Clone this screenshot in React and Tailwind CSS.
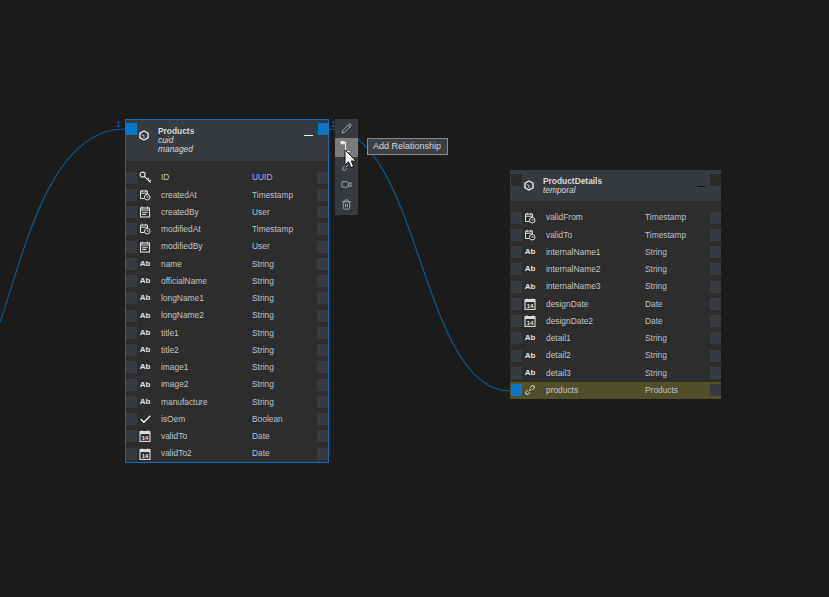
import React from 'react';
import { Pencil, Trash2, Video, Check } from 'lucide-react';

const FONT = { fontFamily: '"Liberation Sans", Arial, sans-serif' };

const NodeIcon = () => (
    <svg width="10" height="11" viewBox="0 0 10 11" fill="none" stroke="#e8e8e8" strokeWidth="1.4">
        <path d="M5 1 9 3.2V7.8L5 10 1 7.8V3.2Z" />
        <path d="M3 4.5 5 5.6V8" strokeWidth="0.8" />
    </svg>
);

const KeyIcon = () => (
    <svg width="13" height="13" viewBox="0 0 13 13" fill="none" stroke="#e4e4e4" strokeWidth="1.2">
        <circle cx="3.6" cy="3.6" r="2.5" />
        <path d="M5.4 5.4 11.6 11.6M8.6 8.6 10 7.2M10.4 10.4 11.9 9" />
    </svg>
);

const ClockCalIcon = () => (
    <svg width="12" height="12" viewBox="0 0 12 12" fill="none" stroke="#dcdcdc" strokeWidth="1">
        <path d="M5 9.5H1.5V2H8.5V5M1.5 4.2H8.5M3.2 .8V2.8M6.8 .8V2.8" />
        <circle cx="8.2" cy="8.2" r="2.8" fill="#2d2d2d" />
        <path d="M8.2 6.8V8.3H9.6" strokeWidth="0.8" />
    </svg>
);

const UserCalIcon = () => (
    <svg width="12" height="12" viewBox="0 0 12 12" fill="none" stroke="#dcdcdc" strokeWidth="1.1">
        <rect x="1.5" y="2" width="9" height="9" />
        <path d="M3.4 .6V2.6M8.6 .6V2.6M1.5 4H10.5M3.2 6.2H8.8M3.2 8.4H7.2" />
    </svg>
);

const DateIcon = () => (
    <svg width="12" height="12" viewBox="0 0 12 12" fill="none">
        <rect x="1" y="1.6" width="10" height="9.8" stroke="#dcdcdc" strokeWidth="1.1" />
        <path d="M1 1.6H11V4H1Z" fill="#dcdcdc" />
        <path d="M3.2 .4V2M8.8 .4V2" stroke="#dcdcdc" />
        <text x="6" y="9.8" textAnchor="middle" fontSize="6" fontWeight="700" fill="#e8e8e8" style={FONT}>14</text>
    </svg>
);

const LinkIcon = ({ color = '#f0f0f0' }) => (
    <svg width="10" height="10" viewBox="0 0 12 12" fill="none" stroke={color} strokeWidth="1.2">
        <path d="M4.6 7.4 7.4 4.6M6.2 3 8 1.3a1.9 1.9 0 0 1 2.7 2.7L9 5.8M5.8 9 4 10.7A1.9 1.9 0 0 1 1.3 8L3 6.2" />
    </svg>
);

const RelationIcon = () => (
    <svg width="13" height="13" viewBox="0 0 13 13" fill="none" stroke="#e8e8e8" strokeWidth="1.1">
        <path d="M1 1.5H5.5V10.5H10" />
        <path d="M1 .6H4V2.6H1Z" fill="#e8e8e8" />
    </svg>
);

const CursorIcon = () => (
    <svg width="14" height="20" viewBox="0 0 14 20">
        <path d="M1 1V16L4.6 12.8 7 18.6 9.6 17.4 7.2 12H12Z" fill="#ffffff" stroke="#111111" strokeWidth="1" />
    </svg>
);

const Ab = () => <span className="text-[8px] font-bold text-[#e0e0e0]">Ab</span>;

const ICONS = {
    key: <KeyIcon />,
    clock: <ClockCalIcon />,
    user: <UserCalIcon />,
    ab: <Ab />,
    check: <Check size={13} color="#f8f8f8" strokeWidth={2.6} />,
    date: <DateIcon />,
    link: <LinkIcon />,
};

const productFields = [
    ['key', 'ID', 'UUID'],
    ['clock', 'createdAt', 'Timestamp'],
    ['user', 'createdBy', 'User'],
    ['clock', 'modifiedAt', 'Timestamp'],
    ['user', 'modifiedBy', 'User'],
    ['ab', 'name', 'String'],
    ['ab', 'officialName', 'String'],
    ['ab', 'longName1', 'String'],
    ['ab', 'longName2', 'String'],
    ['ab', 'title1', 'String'],
    ['ab', 'title2', 'String'],
    ['ab', 'image1', 'String'],
    ['ab', 'image2', 'String'],
    ['ab', 'manufacture', 'String'],
    ['check', 'isOem', 'Boolean'],
    ['date', 'validTo', 'Date'],
    ['date', 'validTo2', 'Date'],
];

const detailFields = [
    ['clock', 'validFrom', 'Timestamp'],
    ['clock', 'validTo', 'Timestamp'],
    ['ab', 'internalName1', 'String'],
    ['ab', 'internalName2', 'String'],
    ['ab', 'internalName3', 'String'],
    ['date', 'designDate', 'Date'],
    ['date', 'designDate2', 'Date'],
    ['ab', 'detail1', 'String'],
    ['ab', 'detail2', 'String'],
    ['ab', 'detail3', 'String'],
    ['link', 'products', 'Products', true],
];

const FieldRow = ({ icon, name, type, typeColor, highlight, typeLeft, inset }) => (
    <div className={`flex h-[17.25px] items-center ${inset ? 'pl-px' : ''} ${highlight ? 'bg-[#514f28]' : ''}`}>
        <div className={`h-[12px] w-[11px] shrink-0 ${highlight ? 'bg-[#0a76c8]' : 'bg-[#373a3e]'}`} />
        <div className="flex w-[24px] shrink-0 items-center justify-center pr-[8px]">{ICONS[icon]}</div>
        <span className="text-[8.4px] text-[#c4c4c4]">{name}</span>
        <span className={`absolute text-[8.4px] ${typeLeft} ${typeColor || 'text-[#bcc0cc]'}`}>{type}</span>
        <div className="ml-auto h-[12px] w-[11px] shrink-0 bg-[#373a3e]" />
    </div>
);

const App = () => {
    return (
        <div className="relative h-[597px] w-[829px] overflow-hidden bg-[#1c1c1c]" style={FONT}>
            {/* relationship lines */}
            <svg className="absolute inset-0" width="829" height="597" fill="none" stroke="#0e5a92" strokeWidth="1.1">
                <path d="M0 322C25 250 50 129 125 129" />
                <path d="M329 129C420 129 420 391 510 391" />
            </svg>

            {/* Products */}
            <div className="absolute left-[125px] top-[119px] w-[204px] border border-[#0e6cb8] bg-[#2d2d2d]">
                <div className="flex h-[41px] items-start bg-[#373a3e] pt-[7px]">
                    <div className="flex w-[32px] items-center justify-center pl-[4px] pt-[3px]"><NodeIcon /></div>
                    <div className="leading-[9px]">
                        <div className="text-[8.4px] font-bold text-[#d8d8d8]">Products</div>
                        <div className="text-[8.4px] italic text-[#d8d8d8]">cuid</div>
                        <div className="text-[8.4px] italic text-[#d8d8d8]">managed</div>
                    </div>
                    <div className="ml-auto mr-[15px] mt-[8px] h-px w-[9px] bg-[#f0f0f0]" />
                </div>
                <div className="relative pt-[8px]">
                    {productFields.map((f, i) => (
                        <FieldRow key={f[1]} icon={f[0]} name={f[1]} type={f[2]} typeLeft="left-[126px]" typeColor={i === 0 ? 'text-[#b7a9e8]' : ''} />
                    ))}
                </div>
            </div>
            <div className="absolute left-[126px] top-[123px] h-[12px] w-[11px] bg-[#0a76c8]" />
            <div className="absolute left-[318px] top-[123px] h-[12px] w-[11px] bg-[#0a76c8]" />
            <span className="absolute left-[116px] top-[118px] text-[9px] text-[#0a62b8]">1</span>
            <span className="absolute left-[331px] top-[118px] text-[9px] text-[#0a62b8]">1</span>

            {/* toolbar on the selected node */}
            <div className="absolute left-[335px] top-[119px] flex w-[23px] flex-col items-center bg-[#373a3e]">
                <div className="flex h-[19px] w-full items-center justify-center"><Pencil size={11} color="#b4b4b4" /></div>
                <div className="flex h-[19px] w-full items-start justify-center bg-[#7b7b7b] pt-[3px]"><RelationIcon /></div>
                <div className="flex h-[18px] w-full items-center justify-center"><LinkIcon color="#a8a8a8" /></div>
                <div className="flex h-[19px] w-full items-center justify-center"><Video size={11} color="#a8a8a8" /></div>
                <div className="flex h-[21px] w-full items-center justify-center"><Trash2 size={11} color="#a8a8a8" /></div>
            </div>
            <div className="absolute left-[344px] top-[149px]"><CursorIcon /></div>
            <div className="absolute left-[367px] top-[138px] flex h-[17px] w-[81px] items-center border border-[#8a8a8a] bg-[#3c3f43] pl-[5px] text-[9px] text-[#d8d8d8]">Add Relationship</div>

            {/* ProductDetails */}
            <div className="absolute left-[510px] top-[170px] w-[211px] bg-[#2d2d2d]">
                <div className="flex h-[31px] items-start bg-[#373a3e] pt-[7px]">
                    <div className="flex w-[33px] items-center justify-center pl-[5px] pt-[3px]"><NodeIcon /></div>
                    <div className="leading-[9px]">
                        <div className="text-[8.4px] font-bold text-[#d8d8d8]">ProductDetails</div>
                        <div className="text-[8.4px] italic text-[#d8d8d8]">temporal</div>
                    </div>
                    <div className="ml-auto mr-[16px] mt-[9px] h-px w-[8px] bg-[#101010]" />
                </div>
                <div className="absolute left-[1px] top-[4px] h-[12px] w-[11px] bg-[#2b2b2b]" />
                <div className="absolute right-0 top-[4px] h-[12px] w-[11px] bg-[#2b2b2b]" />
                <div className="relative pt-[8px]">
                    {detailFields.map((f) => (
                        <FieldRow key={f[1]} inset icon={f[0]} name={f[1]} type={f[2]} typeLeft="left-[135px]" highlight={f[3]} />
                    ))}
                </div>
            </div>
        </div>
    );
};

export default App;
